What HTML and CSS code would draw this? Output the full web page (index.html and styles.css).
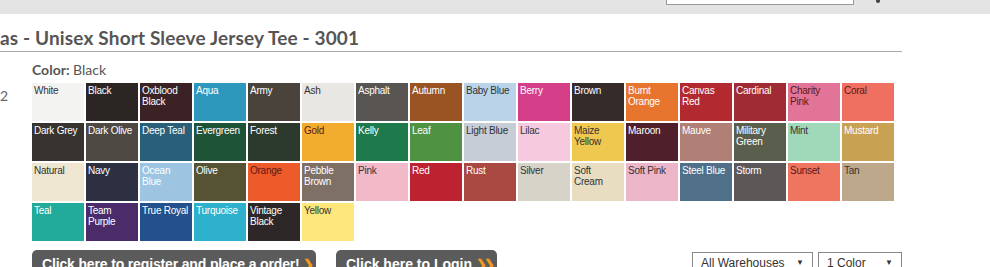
FILE: index.html
```html
<!DOCTYPE html>
<html lang="en">
<head>
    <meta charset="UTF-8">
    <title>Unisex Short Sleeve Jersey Tee - 3001</title>
    <link rel="stylesheet" href="styles.css">
</head>
<body>
    <div class="topbar">
        <div class="search"></div>
        <span class="search-icon"></span>
    </div>

    <h1 class="product-title">as - Unisex Short Sleeve Jersey Tee - 3001</h1>

    <div class="product">
        <div class="qty">2</div>
        <div class="picker">
            <div class="color-label"><b>Color:</b> Black</div>
            <div class="swatches">
                <div class="swatch light" style="background:#f3f3f2">White</div>
                <div class="swatch" style="background:#2b2523">Black</div>
                <div class="swatch" style="background:#3b2224">Oxblood Black</div>
                <div class="swatch" style="background:#2d97bc">Aqua</div>
                <div class="swatch" style="background:#4a433b">Army</div>
                <div class="swatch light" style="background:#e9e7e4">Ash</div>
                <div class="swatch" style="background:#585553">Asphalt</div>
                <div class="swatch" style="background:#9a5424">Autumn</div>
                <div class="swatch light" style="background:#bad3e8">Baby Blue</div>
                <div class="swatch" style="background:#d53f89">Berry</div>
                <div class="swatch" style="background:#352b28">Brown</div>
                <div class="swatch" style="background:#e8752d">Burnt Orange</div>
                <div class="swatch" style="background:#b22a2f">Canvas Red</div>
                <div class="swatch" style="background:#a02b34">Cardinal</div>
                <div class="swatch dark" style="background:#e27498">Charity Pink</div>
                <div class="swatch dark" style="background:#ef6f60">Coral</div>

                <div class="swatch" style="background:#363331">Dark Grey</div>
                <div class="swatch" style="background:#4e4943">Dark Olive</div>
                <div class="swatch" style="background:#2a5f79">Deep Teal</div>
                <div class="swatch" style="background:#1f5337">Evergreen</div>
                <div class="swatch" style="background:#2b3a2d">Forest</div>
                <div class="swatch dark" style="background:#f2ad2f">Gold</div>
                <div class="swatch" style="background:#1f7a4b">Kelly</div>
                <div class="swatch" style="background:#4f9241">Leaf</div>
                <div class="swatch light" style="background:#c6cdd7">Light Blue</div>
                <div class="swatch light" style="background:#f6c9de">Lilac</div>
                <div class="swatch light" style="background:#efc94f">Maize Yellow</div>
                <div class="swatch" style="background:#501f2c">Maroon</div>
                <div class="swatch" style="background:#b07f75">Mauve</div>
                <div class="swatch" style="background:#5a5e4c">Military Green</div>
                <div class="swatch light" style="background:#a0d8ba">Mint</div>
                <div class="swatch" style="background:#c9a152">Mustard</div>

                <div class="swatch light" style="background:#eee6d0">Natural</div>
                <div class="swatch" style="background:#2c3040">Navy</div>
                <div class="swatch" style="background:#9dc5e1">Ocean Blue</div>
                <div class="swatch" style="background:#555333">Olive</div>
                <div class="swatch dark" style="background:#ee5b2b">Orange</div>
                <div class="swatch" style="background:#7e7064">Pebble Brown</div>
                <div class="swatch light" style="background:#f2b9c9">Pink</div>
                <div class="swatch" style="background:#bd2231">Red</div>
                <div class="swatch" style="background:#a94941">Rust</div>
                <div class="swatch light" style="background:#d7d3c8">Silver</div>
                <div class="swatch light" style="background:#e9ddc1">Soft Cream</div>
                <div class="swatch light" style="background:#ecb6c8">Soft Pink</div>
                <div class="swatch" style="background:#506f88">Steel Blue</div>
                <div class="swatch" style="background:#5d5857">Storm</div>
                <div class="swatch dark" style="background:#ef7561">Sunset</div>
                <div class="swatch light" style="background:#bea88b">Tan</div>

                <div class="swatch" style="background:#22aa9b">Teal</div>
                <div class="swatch" style="background:#4b2b69">Team Purple</div>
                <div class="swatch" style="background:#24508b">True Royal</div>
                <div class="swatch" style="background:#2db1cd">Turquoise</div>
                <div class="swatch" style="background:#2d2827">Vintage Black</div>
                <div class="swatch light" style="background:#fde77b">Yellow</div>
            </div>
        </div>
    </div>

    <div class="actions">
        <button class="action-btn register">Click here to register and place a order! <span class="chev">&#x276F;</span></button>
        <button class="action-btn login">Click here to Login <span class="chev double">&#x276F;&#x276F;</span></button>
        <div class="filters">
            <div class="select wide">All Warehouses <span class="arrow">&#9660;</span></div>
            <div class="select narrow">1 Color <span class="arrow">&#9660;</span></div>
        </div>
    </div>
</body>
</html>
```

FILE: styles.css
```css
body {
    margin: 0;
    background-color: #fff;
    font-family: Lato, "Open Sans", sans-serif;
    color: #555;
    overflow: hidden;
}
.topbar {
    height: 14px;
    background-color: #e4e4e4;
    display: flex;
    align-items: flex-start;
    padding-left: 666px;
}
.search {
    width: 186px;
    height: 4px;
    background-color: #fff;
    border: 1px solid #9a9a9a;
    border-top: none;
}
.search-icon {
    width: 4px;
    height: 3px;
    margin-left: 22px;
    background-color: #444;
    border-radius: 0 0 3px 3px;
}
.product-title {
    width: 902px;
    margin: 0;
    padding: 15px 0 5px 0;
    font-size: 19px;
    line-height: 17px;
    letter-spacing: 0.15px;
    font-weight: bold;
    color: #555;
    border-bottom: 1px solid #aaa;
}
.product {
    display: flex;
}
.qty {
    width: 32px;
    padding-top: 35px;
    font-size: 14px;
    color: #666;
}
.color-label {
    font-size: 14px;
    line-height: 16px;
    padding-top: 10px;
    margin-bottom: 5px;
}
.color-label b {
    color: #555;
}
.swatches {
    display: grid;
    grid-template-columns: repeat(16, 52px);
    grid-auto-rows: 38px;
    gap: 2px;
}
.swatch {
    padding: 2px 2px 0 2px;
    font-family: "Liberation Sans", Arial, sans-serif;
    font-size: 10px;
    line-height: 11px;
    letter-spacing: -0.25px;
    color: #fff;
    overflow: hidden;
}
.swatch.light {
    color: #333;
}
.swatch.dark {
    color: #5a1a1a;
}
.actions {
    display: flex;
    align-items: flex-start;
    padding: 9px 0 0 32px;
}
.action-btn {
    height: 24px;
    padding: 5px 10px 0 10px;
    border: none;
    border-radius: 5px 5px 0 0;
    background-color: #5b5b5b;
    color: #fff;
    font-family: "Liberation Sans", Arial, sans-serif;
    font-size: 14px;
    line-height: 16px;
    font-weight: bold;
    text-align: left;
    white-space: nowrap;
    overflow: hidden;
}
.action-btn.register {
    width: 284px;
    letter-spacing: -0.15px;
}
.action-btn.login {
    width: 161px;
    margin-left: 20px;
}
.chev {
    color: #f39a1e;
    font-size: 13px;
}
.chev.double {
    letter-spacing: -3px;
}
.filters {
    display: flex;
    gap: 5px;
    margin-left: 195px;
    margin-top: 2px;
}
.select {
    height: 20px;
    box-sizing: border-box;
    border: 1px solid #888;
    padding: 3px 0 0 8px;
    font-family: "Liberation Sans", Arial, sans-serif;
    font-size: 12px;
    color: #333;
    display: flex;
    justify-content: space-between;
}
.select.wide {
    width: 121px;
}
.select.narrow {
    width: 84px;
}
.arrow {
    font-size: 8px;
    margin-right: 8px;
    margin-top: 2px;
}
```
